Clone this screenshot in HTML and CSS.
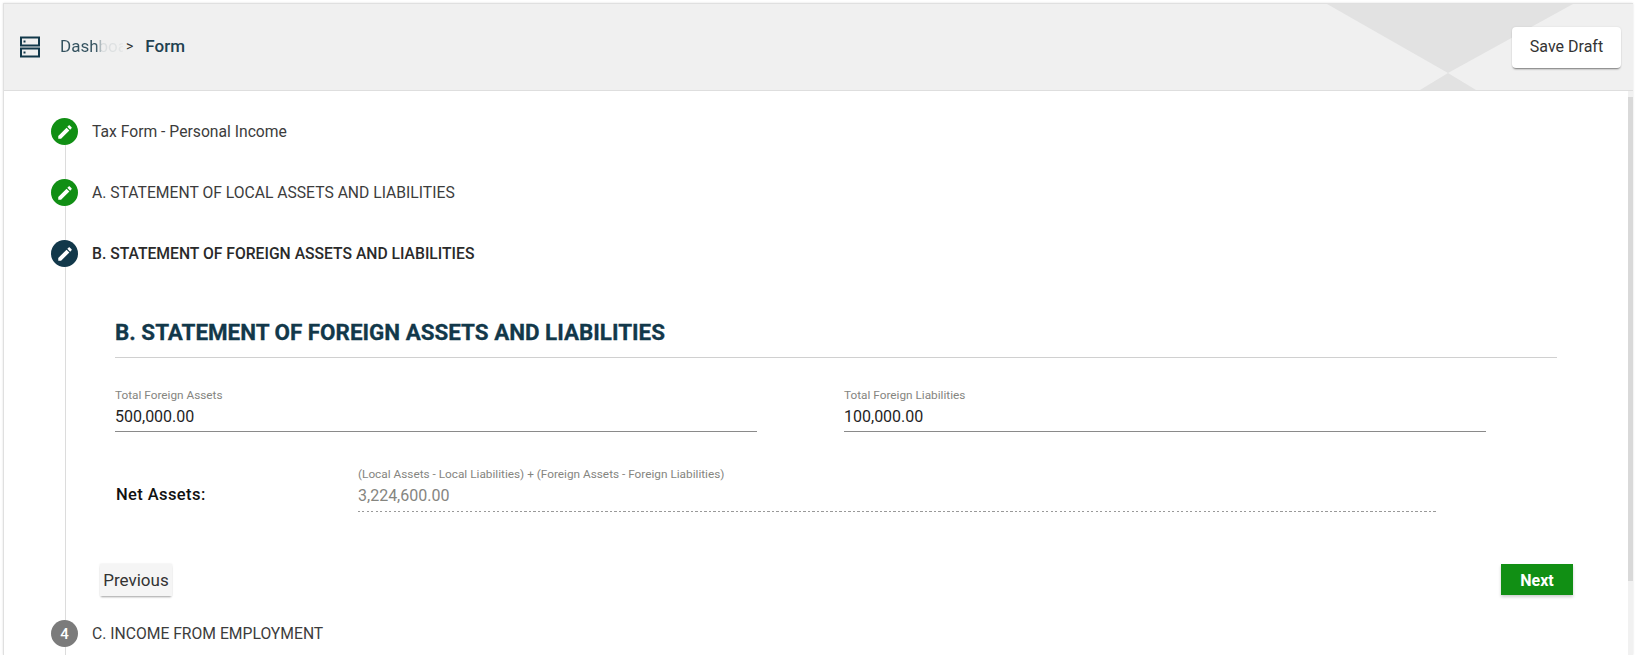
FILE: index.html
```html
<!DOCTYPE html>
<html lang="en">
<head>
<meta charset="utf-8">
<title>Form</title>
<link rel="stylesheet" href="styles.css">
</head>
<body>
<div class="card">
  <header class="topbar">
    <svg class="topbar-art" width="1629" height="86" viewBox="0 0 1629 86"><path d="M1323 0H1569L1444 69Z M1444 69L1416 86H1472Z" fill="#e2e2e2"/></svg>
    <svg class="dns" width="22" height="22" viewBox="0 0 22 22"><rect x="2" y="1.5" width="18" height="8" fill="none" stroke="#12384a" stroke-width="2"/><rect x="2" y="12.5" width="18" height="8" fill="none" stroke="#12384a" stroke-width="2"/><rect x="4.5" y="4.5" width="2" height="2" fill="#12384a"/><rect x="4.5" y="15.5" width="2" height="2" fill="#12384a"/></svg>
    <nav class="crumbs">
      <span class="crumb-faded">Dashboard</span>
      <span class="crumb-sep">&gt;</span>
      <span class="crumb-current">Form</span>
    </nav>
    <button class="btn-save">Save Draft</button>
  </header>
  <div class="body-row">
    <main class="stepper">
      <div class="step">
        <span class="dot dot-done"><svg width="18" height="18" viewBox="0 0 24 24"><path fill="#fff" d="M3 17.25V21h3.75L17.81 9.94l-3.75-3.75L3 17.25zM20.71 7.04c.39-.39.39-1.02 0-1.41l-2.34-2.34c-.39-.39-1.02-.39-1.41 0l-1.83 1.83 3.75 3.75 1.83-1.83z"/></svg></span>
        <span class="step-label">Tax Form - Personal Income</span>
      </div>
      <div class="step">
        <span class="dot dot-done"><svg width="18" height="18" viewBox="0 0 24 24"><path fill="#fff" d="M3 17.25V21h3.75L17.81 9.94l-3.75-3.75L3 17.25zM20.71 7.04c.39-.39.39-1.02 0-1.41l-2.34-2.34c-.39-.39-1.02-.39-1.41 0l-1.83 1.83 3.75 3.75 1.83-1.83z"/></svg></span>
        <span class="step-label">A. STATEMENT OF LOCAL ASSETS AND LIABILITIES</span>
      </div>
      <div class="step">
        <span class="dot dot-active"><svg width="18" height="18" viewBox="0 0 24 24"><path fill="#fff" d="M3 17.25V21h3.75L17.81 9.94l-3.75-3.75L3 17.25zM20.71 7.04c.39-.39.39-1.02 0-1.41l-2.34-2.34c-.39-.39-1.02-.39-1.41 0l-1.83 1.83 3.75 3.75 1.83-1.83z"/></svg></span>
        <span class="step-label step-label-active">B. STATEMENT OF FOREIGN ASSETS AND LIABILITIES</span>
      </div>
      <section class="panel">
        <h2 class="panel-title">B. STATEMENT OF FOREIGN ASSETS AND LIABILITIES</h2>
        <div class="field-row">
          <div class="field">
            <div class="field-label">Total Foreign Assets</div>
            <div class="field-value">500,000.00</div>
          </div>
          <div class="field">
            <div class="field-label">Total Foreign Liabilities</div>
            <div class="field-value">100,000.00</div>
          </div>
        </div>
        <div class="net-row">
          <div class="net-title">Net Assets:</div>
          <div class="net-field">
            <div class="field-label net-label">(Local Assets - Local Liabilities) + (Foreign Assets - Foreign Liabilities)</div>
            <div class="net-value">3,224,600.00</div>
          </div>
        </div>
        <div class="actions">
          <button class="btn-prev">Previous</button>
          <button class="btn-next">Next</button>
        </div>
      </section>
      <div class="step step-last">
        <span class="dot dot-todo">4</span>
        <span class="step-label">C. INCOME FROM EMPLOYMENT</span>
      </div>
    </main>
    <div class="rail"><div class="rail-thumb"></div></div>
  </div>
</div>
</body>
</html>
```
FILE: styles.css
```css
* { box-sizing: border-box; }
html, body { margin: 0; height: 655px; overflow: hidden; background: #fff; }
body { font-family: Roboto, "Liberation Sans", sans-serif; color: #333; padding: 3px 2px 0 3px; }
.card { height: 652px; border-top: 1px solid #e0e0e0; border-left: 1px solid #e0e0e0; display: flex; flex-direction: column; overflow: hidden; box-shadow: 0 0 2px rgba(0,0,0,.12); }
.topbar { position: relative; height: 87px; flex: none; background: #f0f0f0; border-bottom: 1px solid #dedede; display: flex; align-items: center; padding: 0 12px 0 15px; }
.topbar-art { position: absolute; left: 0; top: 0; }
.dns { position: relative; flex: none; margin-bottom: 1px; }
.crumbs { position: relative; display: flex; align-items: center; margin-left: 19px; margin-bottom: 2px; font-size: 17px; flex: 1; }
.crumb-faded { width: 63px; overflow: hidden; white-space: nowrap; color: transparent; background: linear-gradient(90deg, #34525f 0, #34525f 36px, rgba(52,82,95,.12) 42px, rgba(52,82,95,.08) 60px, transparent 66px); -webkit-background-clip: text; background-clip: text; }
.crumb-sep { margin-left: 3px; font-size: 14px; color: #333; }
.crumb-current { margin-left: 12px; color: #1f4150; font-weight: 500; }
.btn-save { position: relative; width: 109px; height: 41px; margin-top: 1px; padding: 0 0 2px; border: 0; border-radius: 4px; background: #fff; font: 400 16px Roboto, sans-serif; color: #333; box-shadow: 0 2px 2px -1px rgba(0,0,0,.5), 0 0 2px rgba(0,0,0,.1); }
.body-row { flex: 1; display: flex; min-height: 0; }
.stepper { position: relative; flex: 1; padding: 10px 0 0 47px; overflow: hidden; }
.stepper::before { content: ""; position: absolute; left: 61px; top: 40px; bottom: 0; width: 1px; background: #dcdcdc; }
.step { position: relative; display: flex; align-items: center; height: 61px; }
.dot { width: 27px; height: 27px; border-radius: 50%; display: flex; align-items: center; justify-content: center; flex: none; color: #fff; font-size: 15px; font-weight: 500; }
.dot-done { background: #118f14; }
.dot-active { background: #12384a; }
.dot-todo { background: #7b7b7b; }
.step-label { margin-left: 14px; font-size: 15.7px; color: #3c3c3c; white-space: nowrap; }
.step-label-active { color: #2a2a2a; font-weight: 500; }
.panel { position: relative; margin-left: 64px; width: 1458px; padding-top: 29px; }
.panel-title { margin: 0; padding: 0 0 6px 0; width: 1442px; font-size: 22.4px; line-height: 38px; font-weight: 700; color: #12384a; border-bottom: 1px solid #d0d0d0; -webkit-text-stroke: .3px #12384a; }
.field-row { display: flex; gap: 87px; margin-top: 30px; }
.field { width: 642px; border-bottom: 1px solid #8a8a8a; height: 44px; }
.field-label { font-size: 11.8px; line-height: 14px; color: #85857f; white-space: nowrap; }
.net-label { margin-top: -1px; margin-bottom: 1px; }
.field-value { font-size: 16px; line-height: 24px; color: #1f1f1f; margin-top: 3px; }
.net-row { display: flex; align-items: flex-start; margin-top: 36px; }
.net-title { width: 242px; margin-top: 15px; margin-left: 1px; font-size: 16.5px; line-height: 24px; font-weight: 500; color: #111; letter-spacing: .4px; }
.net-field { width: 1078px; height: 44px; background: repeating-linear-gradient(90deg, #999 0 2px, transparent 2px 4.5px) left bottom / 100% 1px no-repeat; }
.net-value { font-size: 16px; line-height: 24px; color: #85857f; margin-top: 3px; }
.actions { display: flex; justify-content: space-between; margin-top: 52px; margin-left: -15px; }
.btn-prev { width: 72px; height: 32px; border: 0; padding: 0; background: #f5f5f5; font: 400 17px Roboto, sans-serif; color: #333; box-shadow: 0 2px 2px -1px rgba(0,0,0,.35), 0 0 2px rgba(0,0,0,.1); }
.btn-next { width: 72px; height: 31px; border: 0; padding: 2px 0 0; background: #118f14; font: 700 16px Roboto, sans-serif; color: #fff; box-shadow: 0 2px 3px rgba(0,0,0,.2); }
.step-last { margin-top: 7px; }
.rail { flex: none; width: 5px; background: #f1f1f1; }
.rail-thumb { margin-top: 6px; height: 484px; background: #d9d9d9; }
```
